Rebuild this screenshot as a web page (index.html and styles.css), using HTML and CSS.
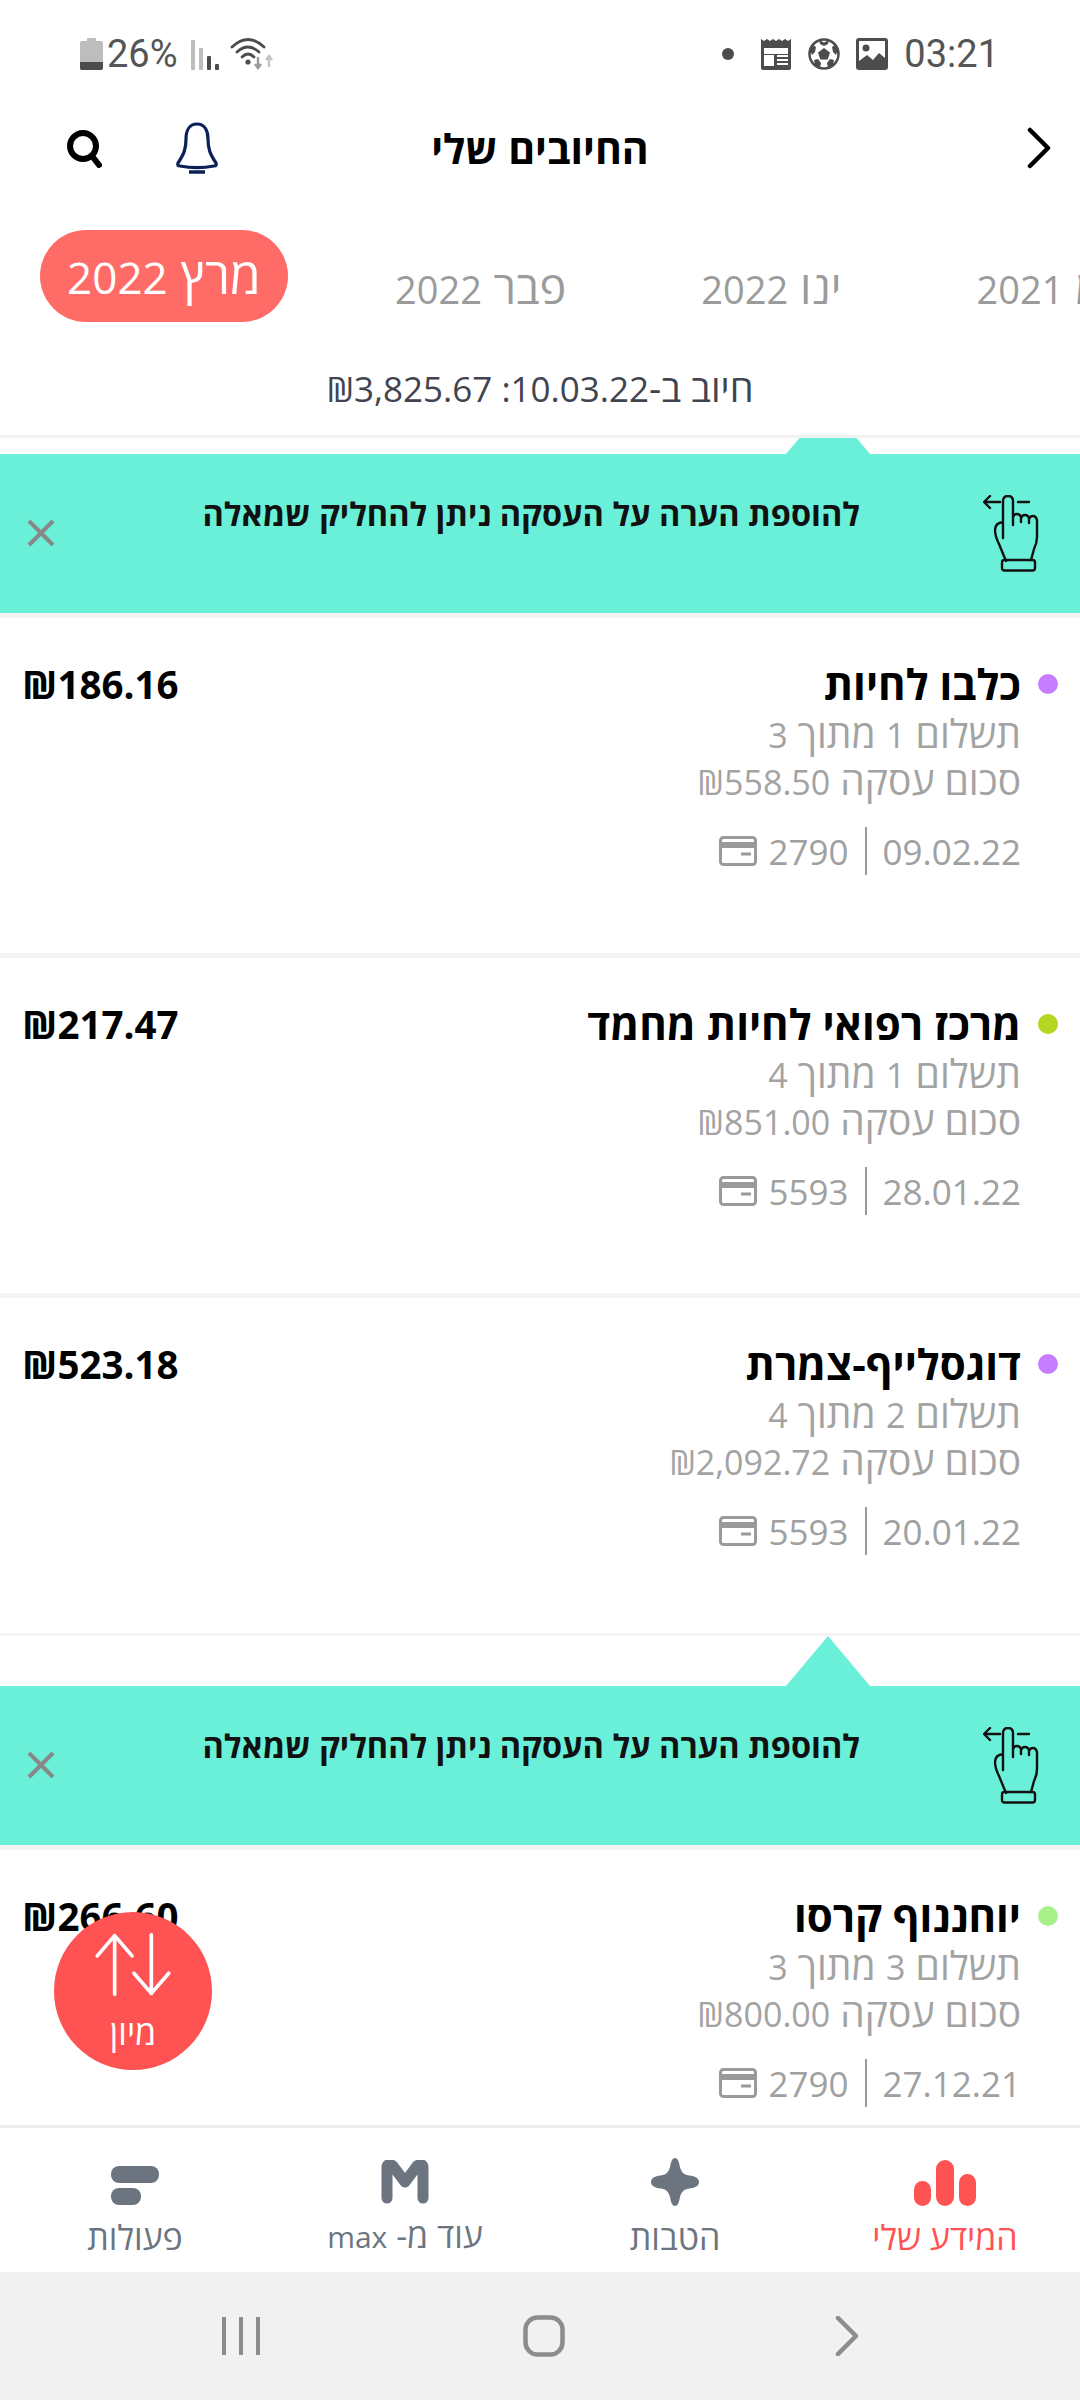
FILE: index.html
```html
<!DOCTYPE html>
<html lang="he">
<head>
    <meta charset="UTF-8">
    <meta name="viewport" content="width=device-width, initial-scale=1.0">
    <title>החיובים שלי</title>
    <link rel="stylesheet" href="styles.css">
</head>
<body>
<svg class="defs" aria-hidden="true">
    <symbol id="i-card" viewBox="0 0 38 30">
        <rect x="1.5" y="1.5" width="35" height="27" rx="3" fill="none" stroke="currentColor" stroke-width="3"/>
        <rect x="1.5" y="6" width="35" height="6" fill="currentColor"/>
        <path d="M22 18h10" stroke="currentColor" stroke-width="3"/>
    </symbol>
    <symbol id="i-hand" viewBox="0 0 56 77">
        <path d="M1 7h16M7 1 1 7l6 6M35 7h11" fill="none" stroke="#111" stroke-width="2.4" stroke-linecap="round" stroke-linejoin="round"/>
        <path d="M20 43V6q0-5 5-5t5 5v24M30 22q1-3 4-3t4 3v5M38 23q1-3 4-3t4 3v5M46 24q1-3 4-3t4 4v17q0 6-3 12l-3 11M23 66l-7-17q-4-8-4-14 0-7 8-8" fill="none" stroke="#111" stroke-width="2.4" stroke-linecap="round" stroke-linejoin="round"/>
        <rect x="19" y="65" width="33" height="10.500" rx="2.500" fill="none" stroke="#111" stroke-width="2.400"/>
    </symbol>
    <symbol id="i-close" viewBox="0 0 28 28">
        <path d="M2 2l24 24M26 2 2 26" stroke="#888" stroke-width="4"/>
    </symbol>
</svg>
<div class="app">
    <div class="status">
        <div class="status-side">
            <svg class="st-battery" width="24" height="32" viewBox="0 0 24 32"><path d="M7 0h9v3h5q2 0 2 2v25q0 2-2 2H2q-2 0-2-2V5q0-2 2-2h5z" fill="#bdbdbd"/><path d="M0 24h23v6q0 2-2 2H2q-2 0-2-2z" fill="#4c4c4c"/></svg>
            <span class="st-text st-pct">26%</span>
            <svg class="st-signal" width="30" height="32" viewBox="0 0 30 32"><rect x="1" y="2" width="4" height="30" rx="1" fill="#bdbdbd"/><rect x="9" y="10" width="4" height="22" rx="1" fill="#bdbdbd"/><rect x="17" y="18" width="4" height="14" rx="1" fill="#4c4c4c"/><rect x="25" y="26" width="4" height="6" rx="1" fill="#4c4c4c"/></svg>
            <svg class="st-wifi" width="46" height="34" viewBox="0 0 46 34"><g fill="none" stroke="#4c4c4c" stroke-width="2.800" stroke-linecap="round"><path d="M2 10Q18-5 34 10"/><path d="M7 15Q18 5 29 15"/><path d="M12 20Q18 14 24 20"/></g><circle cx="18" cy="25" r="2.600" fill="#4c4c4c"/><path d="M28 20v11m-3-4 3 4 3-4" fill="none" stroke="#9a9a9a" stroke-width="2.400"/><path d="M39 30V19m-3 4 3-4 3 4" fill="none" stroke="#c4c4c4" stroke-width="2.400"/></svg>
        </div>
        <div class="status-side">
            <span class="st-dot"></span>
            <svg class="st-news" width="32" height="32" viewBox="0 0 32 32"><path d="M1 1l3 2 3-2 3 2 3-2 3 2 3-2 3 2 3-2 3 2 3-2v29q0 2-2 2H3q-2 0-2-2z" fill="#4c4c4c"/><rect x="4" y="10" width="24" height="6" fill="#fff"/><rect x="4" y="17" width="10" height="11" fill="#fff"/><path d="M17 18h11M17 22h11M17 26h11" stroke="#fff" stroke-width="2"/></svg>
            <svg class="st-ball" width="32" height="32" viewBox="0 0 32 32"><circle cx="16" cy="16" r="14.500" fill="#fff" stroke="#4c4c4c" stroke-width="2.500"/><path d="M16 10l6 4.500-2.300 7h-7.400l-2.300-7z" fill="#4c4c4c"/><path d="M11 2l5 2.500 5-2.500-1 4-4 2-4-2zM2 12l3-5 3 2-1 5-3 3zM30 12l-3-5-3 2 1 5 3 3zM7 27l-1-5 4-1 3 4-1 5zM25 27l1-5-4-1-3 4 1 5z" fill="#4c4c4c"/></svg>
            <svg class="st-photo" width="32" height="32" viewBox="0 0 32 32"><rect x="0" y="0" width="32" height="32" rx="3" fill="#4c4c4c"/><rect x="3" y="3" width="26" height="26" fill="#fff"/><circle cx="10" cy="10" r="3.500" fill="#4c4c4c"/><path d="M3 29v-6l8-6 6 5 6-7 6 5v9z" fill="#4c4c4c"/></svg>
            <span class="st-text st-time">03:21</span>
        </div>
    </div>

    <div class="topbar">
        <div class="topbar-icons">
            <svg width="36" height="40" viewBox="0 0 36 40"><circle cx="17" cy="18" r="13" fill="none" stroke="#000" stroke-width="6"/><path d="M26 28l7 9" stroke="#000" stroke-width="6" stroke-linecap="round"/></svg>
            <svg width="46" height="52" viewBox="0 0 46 52"><path d="M23 2c-8 0-11 7-11 15 0 10-2 15-8 24-1 2 0 3 2 3 11 2 23 2 34 0 2 0 3-1 2-3-6-9-8-14-8-24 0-8-3-15-11-15z" fill="none" stroke="#0b2058" stroke-width="3.200" stroke-linejoin="round"/><path d="M15 50h16" stroke="#0b2058" stroke-width="3.500"/></svg>
        </div>
        <h1 class="title">החיובים שלי</h1>
        <div class="topbar-back">
            <svg width="26" height="42" viewBox="0 0 26 42"><path d="M4 3l18 18L4 39" fill="none" stroke="#000" stroke-width="4.500" stroke-linecap="round" stroke-linejoin="round"/></svg>
        </div>
    </div>

    <div class="months" dir="ltr">
        <span class="month month-active" dir="rtl"><span>מרץ <span class="num">2022</span></span></span>
        <span class="month month-next" dir="rtl">פבר <span class="num">2022</span></span>
        <span class="month" dir="rtl">ינו <span class="num">2022</span></span>
        <span class="month" dir="rtl">דצמ <span class="num">2021</span></span>
    </div>

    <div class="summary" dir="rtl"><span>חיוב ב-<span class="num">10.03.22: ₪3,825.67</span></span></div>

    <div class="list">
        <div class="list-inner">
            <div class="tip">
                <span class="tip-arrow"></span>
                <div class="tip-box">
                    <svg class="tip-hand" width="56" height="77"><use href="#i-hand"/></svg>
                    <p class="tip-text">להוספת הערה על העסקה ניתן להחליק שמאלה</p>
                    <svg class="tip-close" width="28" height="28"><use href="#i-close"/></svg>
                </div>
            </div>

            <div class="tx">
                <span class="dot dot-purple"></span>
                <div class="tx-main">
                    <div class="tx-title">כלבו לחיות</div>
                    <div class="tx-line">תשלום <span class="num">1</span> מתוך <span class="num">3</span></div>
                    <div class="tx-line">סכום עסקה <span class="num">₪558.50</span></div>
                    <div class="tx-foot"><span>09.02.22</span><i class="sep"></i><span>2790</span><svg class="card-ic" width="38" height="30"><use href="#i-card"/></svg></div>
                </div>
                <div class="tx-amount" dir="ltr">₪186.16</div>
            </div>

            <div class="tx">
                <span class="dot dot-olive"></span>
                <div class="tx-main">
                    <div class="tx-title">מרכז רפואי לחיות מחמד</div>
                    <div class="tx-line">תשלום <span class="num">1</span> מתוך <span class="num">4</span></div>
                    <div class="tx-line">סכום עסקה <span class="num">₪851.00</span></div>
                    <div class="tx-foot"><span>28.01.22</span><i class="sep"></i><span>5593</span><svg class="card-ic" width="38" height="30"><use href="#i-card"/></svg></div>
                </div>
                <div class="tx-amount" dir="ltr">₪217.47</div>
            </div>

            <div class="tx tx-last">
                <span class="dot dot-purple"></span>
                <div class="tx-main">
                    <div class="tx-title">דוגסלייף-צמרת</div>
                    <div class="tx-line">תשלום <span class="num">2</span> מתוך <span class="num">4</span></div>
                    <div class="tx-line">סכום עסקה <span class="num">₪2,092.72</span></div>
                    <div class="tx-foot"><span>20.01.22</span><i class="sep"></i><span>5593</span><svg class="card-ic" width="38" height="30"><use href="#i-card"/></svg></div>
                </div>
                <div class="tx-amount" dir="ltr">₪523.18</div>
            </div>

            <div class="tip">
                <span class="tip-arrow"></span>
                <div class="tip-box">
                    <svg class="tip-hand" width="56" height="77"><use href="#i-hand"/></svg>
                    <p class="tip-text">להוספת הערה על העסקה ניתן להחליק שמאלה</p>
                    <svg class="tip-close" width="28" height="28"><use href="#i-close"/></svg>
                </div>
            </div>

            <div class="tx">
                <span class="dot dot-green"></span>
                <div class="tx-main">
                    <div class="tx-title">יוחננוף קרסו</div>
                    <div class="tx-line">תשלום <span class="num">3</span> מתוך <span class="num">3</span></div>
                    <div class="tx-line">סכום עסקה <span class="num">₪800.00</span></div>
                    <div class="tx-foot"><span>27.12.21</span><i class="sep"></i><span>2790</span><svg class="card-ic" width="38" height="30"><use href="#i-card"/></svg></div>
                </div>
                <div class="tx-amount" dir="ltr">₪266.60</div>
            </div>
        </div>

        <div class="fab">
            <svg width="78" height="66" viewBox="0 0 84 72"><g fill="none" stroke="#fff" stroke-width="4" stroke-linecap="round" stroke-linejoin="round"><path d="M22 68V4M3 26 22 4l19 22"/><path d="M62 3v64M43 45l19 22 19-22"/></g></svg>
            <span class="fab-label">מיון</span>
        </div>
    </div>

    <nav class="tabbar">
        <div class="tab tab-active">
            <svg width="62" height="46" viewBox="0 0 62 46"><rect x="0" y="21" width="17" height="25" rx="8.500" fill="#ff5252"/><rect x="22" y="0" width="18" height="46" rx="9" fill="#ff5252"/><rect x="45" y="14" width="17" height="32" rx="8.500" fill="#ff5252"/></svg>
            <span>המידע שלי</span>
        </div>
        <div class="tab">
            <svg width="48" height="48" viewBox="0 0 48 48"><path d="M24 0c3 0 4 4 5 9 1 4 3 7 7 8 6 1 12 2 12 7s-6 6-12 7c-4 1-6 4-7 8-1 5-2 9-5 9s-4-4-5-9c-1-4-3-7-7-8C6 30 0 29 0 24s6-6 12-7c4-1 6-4 7-8 1-5 2-9 5-9z" fill="#6c757f"/></svg>
            <span>הטבות</span>
        </div>
        <div class="tab">
            <svg width="48" height="44" viewBox="0 0 48 44"><path d="M6 38V7c0-3 4-3 6-1l12 16L36 6c2-2 6-2 6 1v31" fill="none" stroke="#6c757f" stroke-width="11" stroke-linecap="round" stroke-linejoin="round"/></svg>
            <span dir="rtl">עוד מ- <span class="num">max</span></span>
        </div>
        <div class="tab">
            <svg width="48" height="40" viewBox="0 0 48 40"><rect x="0" y="0" width="48" height="17" rx="8" fill="#6c757f"/><rect x="0" y="22" width="30" height="17" rx="8" fill="#6c757f"/></svg>
            <span>פעולות</span>
        </div>
    </nav>

    <div class="sysnav">
        <svg width="40" height="38" viewBox="0 0 40 38"><path d="M3 1v36M20 1v36M37 1v36" stroke="#8c8c8c" stroke-width="4" stroke-linecap="round"/></svg>
        <svg width="42" height="42" viewBox="0 0 42 42"><rect x="2.500" y="2.500" width="37" height="37" rx="12" fill="none" stroke="#8c8c8c" stroke-width="4.500"/></svg>
        <svg width="24" height="40" viewBox="0 0 24 40"><path d="M3 2l18 18L3 38" fill="none" stroke="#8c8c8c" stroke-width="4.500" stroke-linecap="round" stroke-linejoin="round"/></svg>
    </div>
</div>
</body>
</html>
```

FILE: styles.css
```css
* {
    box-sizing: border-box;
}
html, body {
    margin: 0;
    padding: 0;
}
body {
    font-family: "Open Sans", "DejaVu Sans", sans-serif;
    background: #fff;
}
.defs {
    display: none;
}
.app {
    width: 1080px;
    height: 2400px;
    display: flex;
    flex-direction: column;
    overflow: hidden;
    background: #fff;
}

/* status bar */
.status {
    height: 100px;
    padding: 8px 81px 0 80px;
    display: flex;
    justify-content: space-between;
    align-items: center;
}
.status-side {
    display: flex;
    align-items: center;
}
.st-text {
    font-family: Roboto, sans-serif;
    font-size: 38px;
    color: #555;
}
.st-pct {
    margin-left: 3px;
}
.st-signal {
    margin-left: 12px;
}
.st-wifi {
    margin-left: 10px;
}
.st-dot {
    width: 12px;
    height: 12px;
    border-radius: 50%;
    background: #4c4c4c;
    margin-right: 26px;
}
.st-news, .st-ball, .st-photo {
    margin-right: 16px;
}

/* header */
.topbar {
    height: 96px;
    display: grid;
    grid-template-columns: 1fr auto 1fr;
    align-items: center;
    padding: 0 28px;
}
.topbar-icons {
    display: flex;
    align-items: center;
    gap: 72px;
    margin-left: 38px;
}
.topbar-back {
    display: flex;
    justify-content: flex-end;
}
.title {
    margin: 0;
    font-size: 41px;
    font-weight: 700;
    color: #000;
}

/* months */
.months {
    display: flex;
    align-items: center;
    height: 92px;
    margin-top: 34px;
    padding-left: 40px;
    gap: 135px;
    white-space: nowrap;
    overflow: hidden;
}
.month {
    flex: none;
    font-size: 45px;
    line-height: 60px;
    color: #9b9b9b;
    padding-top: 24px;
}
.month .num {
    font-size: 38px;
}
.month-next {
    margin-left: -28px;
}
.month-active {
    width: 248px;
    height: 92px;
    padding: 0;
    border-radius: 46px;
    background: #ff6b66;
    color: #fff;
    font-size: 50px;
    display: flex;
    align-items: center;
    justify-content: center;
}
.month-active .num {
    font-size: 44px;
}

/* charge summary */
.summary {
    height: 116px;
    padding-top: 16px;
    display: flex;
    align-items: center;
    justify-content: center;
    font-size: 38px;
    color: #3f4450;
    border-bottom: 3px solid #f2f2f2;
    flex: none;
}
.summary .num {
    font-size: 35px;
}

/* list */
.list {
    position: relative;
    flex: 1;
    overflow: hidden;
}
.list-inner {
    margin-top: -34px;
}
.tip {
    position: relative;
    padding-top: 50px;
    border-bottom: 5px solid #f4f4f4;
}
.tip-arrow {
    position: absolute;
    top: 0;
    right: 210px;
    width: 0;
    height: 0;
    border-left: 42px solid transparent;
    border-right: 42px solid transparent;
    border-bottom: 50px solid #6af0d8;
}
.tip-box {
    height: 159px;
    background: #6af0d8;
    display: flex;
    padding: 41px 41px 0 26px;
    position: relative;
    direction: rtl;
}
.tip-hand {
    flex: none;
}
.tip-text {
    margin: -1px 123px 0 0;
    font-size: 32.5px;
    line-height: 40px;
    font-weight: 700;
    color: #111;
    white-space: nowrap;
}
.tip-close {
    position: absolute;
    left: 27px;
    top: 65px;
}

.tx {
    height: 340px;
    direction: rtl;
    display: flex;
    align-items: flex-start;
    padding: 41px 22px 0;
    border-bottom: 5px solid #f4f4f4;
}
.tx-last {
    height: 338px;
    border-bottom: 3px solid #f4f4f4;
}
.dot {
    flex: none;
    width: 20px;
    height: 20px;
    border-radius: 50%;
    margin: 15px 0 0 17px;
}
.dot-purple {
    background: #c77dff;
}
.dot-olive {
    background: #b5d61f;
}
.dot-green {
    background: #a8f08a;
}
.tx-main {
    flex: 1;
}
.tx-title {
    font-size: 42px;
    font-weight: 700;
    color: #000;
    line-height: 50px;
}
.tx-line {
    font-size: 39px;
    color: #a3a3a3;
    line-height: 47px;
}
.tx-line .num {
    font-size: 34px;
    line-height: 1;
}
.tx-foot {
    display: flex;
    align-items: center;
    gap: 16px;
    margin-top: 24px;
    font-size: 35px;
    color: #a0a0a0;
}
.sep {
    width: 2px;
    height: 48px;
    background: #9a9a9a;
}
.card-ic {
    color: #9a9a9a;
    margin-right: -5px;
}
.tx-amount {
    flex: none;
    font-size: 38.5px;
    font-weight: 700;
    color: #000;
    line-height: 50px;
}

/* sort button */
.fab {
    position: absolute;
    left: 54px;
    top: 1474px;
    width: 158px;
    height: 158px;
    border-radius: 50%;
    background: #ff5252;
    color: #fff;
    display: flex;
    flex-direction: column;
    align-items: center;
    padding-top: 20px;
}
.fab-label {
    font-size: 34px;
    line-height: 40px;
    margin-top: 14px;
}

/* bottom nav */
.tabbar {
    flex: none;
    height: 147px;
    border-top: 3px solid #ececec;
    direction: rtl;
    display: grid;
    grid-template-columns: repeat(4, 270px);
    background: #fff;
}
.tab {
    display: flex;
    flex-direction: column;
    align-items: center;
    justify-content: flex-end;
    gap: 8px;
    font-size: 34px;
    line-height: 46px;
    color: #6c757f;
    padding-bottom: 12px;
}
.tab .num {
    font-size: 30px;
}
.tab-active {
    color: #ff5252;
}
.sysnav {
    flex: none;
    height: 128px;
    background: #f1f1f1;
    display: grid;
    grid-template-columns: repeat(3, 1fr);
    justify-items: center;
    align-items: center;
    padding: 0 81px 0 89px;
}
```
